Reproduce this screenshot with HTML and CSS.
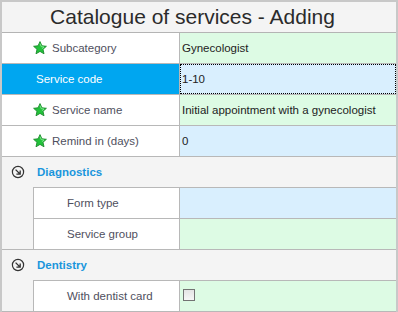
FILE: index.html
```html
<!DOCTYPE html>
<html>
<head>
<meta charset="utf-8">
<link rel="stylesheet" href="styles.css">
</head>
<body>
<div class="form">
  <div class="title">Catalogue of services - Adding</div>

  <div class="row">
    <div class="label"><svg class="star" viewBox="0 0 14 14"><path d="M7 0.6 L8.9 4.8 L13.4 5.3 L10 8.3 L11 12.8 L7 10.4 L3 12.8 L4 8.3 L0.6 5.3 L5.1 4.8 Z" fill="#22c23a" stroke="#1c8a2c" stroke-width="0.9" stroke-linejoin="round"/><path d="M7 2.6 L8.2 5.6 L11 6 L8.9 7.8" fill="none" stroke="#8ef09a" stroke-width="0.8"/></svg>Subcategory</div>
    <div class="value green">Gynecologist</div>
  </div>
  <div class="row selected">
    <div class="label">Service code</div>
    <div class="value blue focus">1-10</div>
  </div>
  <div class="row">
    <div class="label"><svg class="star" viewBox="0 0 14 14"><path d="M7 0.6 L8.9 4.8 L13.4 5.3 L10 8.3 L11 12.8 L7 10.4 L3 12.8 L4 8.3 L0.6 5.3 L5.1 4.8 Z" fill="#22c23a" stroke="#1c8a2c" stroke-width="0.9" stroke-linejoin="round"/><path d="M7 2.6 L8.2 5.6 L11 6 L8.9 7.8" fill="none" stroke="#8ef09a" stroke-width="0.8"/></svg>Service name</div>
    <div class="value green">Initial appointment with a gynecologist</div>
  </div>
  <div class="row">
    <div class="label"><svg class="star" viewBox="0 0 14 14"><path d="M7 0.6 L8.9 4.8 L13.4 5.3 L10 8.3 L11 12.8 L7 10.4 L3 12.8 L4 8.3 L0.6 5.3 L5.1 4.8 Z" fill="#22c23a" stroke="#1c8a2c" stroke-width="0.9" stroke-linejoin="round"/><path d="M7 2.6 L8.2 5.6 L11 6 L8.9 7.8" fill="none" stroke="#8ef09a" stroke-width="0.8"/></svg>Remind in (days)</div>
    <div class="value blue">0</div>
  </div>

  <div class="group">
    <div class="group-head">
      <svg class="gicon" viewBox="0 0 14 14"><circle cx="7" cy="7" r="5.6" fill="none" stroke="#333" stroke-width="1.2"/><path d="M4.6 4.6 L9 9 M9.2 5.4 V9.2 H5.4" fill="none" stroke="#333" stroke-width="1.3"/></svg>
      <span class="gtitle">Diagnostics</span>
    </div>
    <div class="group-body">
      <div class="row sub">
        <div class="label">Form type</div>
        <div class="value blue"></div>
      </div>
      <div class="row sub">
        <div class="label">Service group</div>
        <div class="value green"></div>
      </div>
    </div>
  </div>

  <div class="group">
    <div class="group-head">
      <svg class="gicon" viewBox="0 0 14 14"><circle cx="7" cy="7" r="5.6" fill="none" stroke="#333" stroke-width="1.2"/><path d="M4.6 4.6 L9 9 M9.2 5.4 V9.2 H5.4" fill="none" stroke="#333" stroke-width="1.3"/></svg>
      <span class="gtitle">Dentistry</span>
    </div>
    <div class="group-body">
      <div class="row sub">
        <div class="label">With dentist card</div>
        <div class="value green"><span class="checkbox"></span></div>
      </div>
    </div>
  </div>
</div>
</body>
</html>
```

FILE: styles.css
```css
html, body {
  margin: 0;
  padding: 0;
  background: #ffffff;
}

.form {
  box-sizing: border-box;
  width: 398px;
  height: 312px;
  border-top: 2px solid #c8c8c8;
  border-left: 2px solid #c8c8c8;
  border-right: 2px solid #c8c8c8;
  background: #f4f4f4;
  font-family: "Liberation Sans", Arial, sans-serif;
  font-size: 11.5px;
  overflow: hidden;
}

.title {
  height: 30px;
  line-height: 30px;
  border-bottom: 1px solid #b4b4b4;
  background: #f4f4f4;
  color: #2b2b2b;
  font-size: 21px;
  text-align: center;
  padding-right: 13px;
}

.row {
  display: flex;
  height: 30px;
  border-bottom: 1px solid #b8b8b8;
}

.label {
  box-sizing: border-box;
  flex: 0 0 178px;
  display: flex;
  align-items: center;
  padding-left: 34px;
  background: #ffffff;
  border-right: 1px solid #b8b8b8;
  color: #4f4f5e;
}

.star {
  width: 14px;
  height: 14px;
  margin-left: -3px;
  margin-right: 5px;
  flex: none;
}

.value {
  flex: 1;
  display: flex;
  align-items: center;
  padding-left: 2px;
  color: #222222;
}

.green {
  background: #ddfbe4;
}

.blue {
  background: #d9effe;
}

.selected .label {
  background: #00a6f0;
  color: #ffffff;
}

.focus {
  outline: 1px dotted #000000;
  outline-offset: -1px;
}

.group {
  border-bottom: 1px solid #b8b8b8;
}

.group-head {
  height: 30px;
  display: flex;
  align-items: center;
  background: #f4f4f4;
}

.gicon {
  width: 14px;
  height: 14px;
  margin-left: 9px;
  margin-right: 12px;
  flex: none;
}

.gtitle {
  color: #1a96dc;
  font-weight: bold;
  font-size: 11.5px;
}

.group-body {
  padding-left: 31px;
}

.row.sub {
  border-bottom: none;
  border-top: 1px solid #b8b8b8;
}

.row.sub .label {
  flex-basis: 147px;
  border-left: 1px solid #b8b8b8;
  padding-left: 33px;
}

.checkbox {
  box-sizing: border-box;
  width: 12px;
  height: 12px;
  margin-left: 1px;
  margin-top: -3px;
  border: 1px solid #737373;
  background: linear-gradient(#e4e4e4, #f6f6f6);
}
```
